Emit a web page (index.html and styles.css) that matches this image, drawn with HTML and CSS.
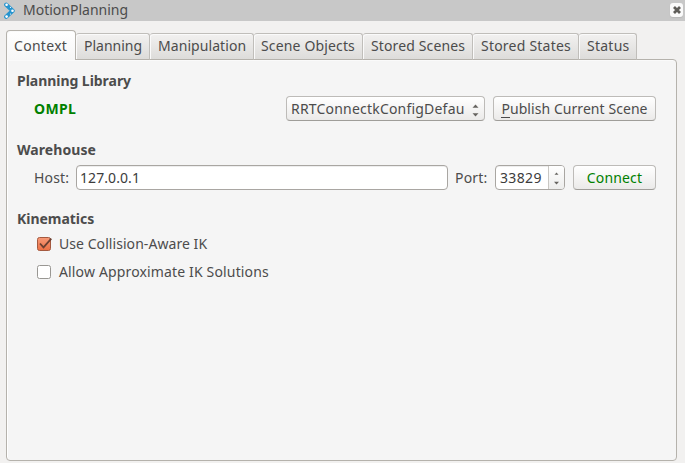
FILE: index.html
```
<!DOCTYPE html>
<html lang="en">
<head>
<meta charset="utf-8">
<title>MotionPlanning</title>
<link rel="stylesheet" href="styles.css">
</head>
<body>
<header class="titlebar">
  <svg class="logo" width="12" height="18" viewBox="0 0 12 18">
    <path d="M2.2 2.8 8.6 8.8 2.2 14.8" fill="none" stroke="#2694cf" stroke-width="4.2" stroke-linejoin="round" stroke-linecap="round"/>
    <g fill="#fff"><circle cx="2.6" cy="2.8" r="1.3"/><circle cx="6.5" cy="5.3" r=".6"/><circle cx="8.5" cy="8.8" r="1.3"/><circle cx="6.5" cy="12" r=".6"/><circle cx="2.6" cy="14.6" r="1.3"/></g>
  </svg>
  <span class="tight">MotionPlanning</span>
  <button class="close" aria-label="Close"><svg width="8" height="8" viewBox="0 0 8 8"><path d="M1 1 7 7M7 1 1 7" stroke="#5f5d59" stroke-width="2.8"/></svg></button>
</header>
<nav class="tabs">
  <div class="tab active">Context</div>
  <div class="tab planning">Planning</div>
  <div class="tab manipulation">Manipulation</div>
  <div class="tab objects">Scene Objects</div>
  <div class="tab scenes">Stored Scenes</div>
  <div class="tab states">Stored States</div>
  <div class="tab status">Status</div>
</nav>
<main class="pane">
  <section>
    <h2 class="library">Planning Library</h2>
    <div class="row">
      <span class="ompl">OMPL</span>
      <div class="button combo"><span>RRTConnectkConfigDefau</span>
        <svg width="7" height="13" viewBox="0 0 7 13" fill="#65635f"><path d="M.5 3.8 3.5.5l3 3.3zM.5 9.2l3 3.3 3-3.3z"/></svg>
      </div>
      <div class="button publish"><span><span class="mnemonic">P</span>ublish Current Scene</span></div>
    </div>
  </section>
  <section>
    <h2 class="warehouse">Warehouse</h2>
    <div class="row">
      <span class="host">Host:</span>
      <div class="field address">127.0.0.1</div>
      <span class="port">Port:</span>
      <div class="field spin"><span class="number">33829</span>
        <span class="steps"><svg width="5" height="13" viewBox="0 0 5 13" fill="#65635f"><path d="M.5 2.8 2.5.5l2 2.3z"/><path d="M0 9.7 2.5 12.5 5 9.7z"/></svg></span>
      </div>
      <div class="button connect">Connect</div>
    </div>
  </section>
  <section>
    <h2>Kinematics</h2>
    <div class="check">
      <svg width="17" height="16" viewBox="0 0 17 16"><defs><linearGradient id="on" x2="0" y2="1"><stop stop-color="#f79a78"/><stop offset="1" stop-color="#ec6f43"/></linearGradient></defs><rect x="1.5" y="1.5" width="13" height="13" rx="2" fill="url(#on)" stroke="#a4593f"/><path d="M4 7.5 7.5 11.3 15.3 2.7" fill="none" stroke="#6b3f31" stroke-width="1.8"/></svg>
      <span class="aware">Use Collision-Aware IK</span>
    </div>
    <div class="check">
      <svg width="17" height="16" viewBox="0 0 17 16"><rect x="1.5" y="1.5" width="13" height="13" rx="2" fill="#fff" stroke="#999793"/></svg>
      <span class="approx">Allow Approximate IK Solutions</span>
    </div>
  </section>
</main>
</body>
</html>
```
FILE: styles.css
```
* { box-sizing: border-box; }
body {
  margin: 0;
  height: 463px;
  overflow: hidden;
  background: #f2f1f0;
  color: #4c4c4c;
  font: 14px/20px "Noto Sans", sans-serif;
  letter-spacing: .17px;
  white-space: nowrap;
}
.titlebar {
  display: flex;
  align-items: flex-start;
  height: 21px;
  padding: 0 2px 0 4px;
  background: #c8c8c8;
}
.logo { margin: 2px 7px 0 0; }
.tight { letter-spacing: 0; }
.close {
  display: flex;
  align-items: center;
  justify-content: center;
  width: 13px;
  height: 14px;
  margin: 3px 0 0 auto;
  padding: 0;
  border: 0;
  border-radius: 3px;
  background: #fafafa;
  box-shadow: 0 1px 1px #9995;
}
.tabs {
  display: flex;
  align-items: flex-end;
  height: 39px;
  padding-left: 6px;
}
.tab {
  height: 27px;
  padding: 2px 0 0 7px;
  border: 1px solid #c0beba;
  border-left: 0;
  border-bottom-color: #b5b2ac;
  border-radius: 3px 3px 0 0;
  background: linear-gradient(#f2f1f0, #dddcda);
  box-shadow: inset 1px 1px #fafafa;
}
.tab.active {
  position: relative;
  width: 70px;
  height: 30px;
  padding: 5px 0 0 7px;
  border: 1px solid #b5b2ac;
  border-bottom: 0;
  border-radius: 4px 4px 0 0;
  background: linear-gradient(#fff, #f6f6f6);
  letter-spacing: .3px;
}
.tab.planning { width: 74px; padding-left: 8px; letter-spacing: 0; }
.tab.manipulation { width: 104px; padding-left: 8px; letter-spacing: .07px; }
.tab.objects { width: 109px; letter-spacing: .15px; }
.tab.scenes { width: 110px; padding-left: 8px; letter-spacing: .13px; }
.tab.states { width: 106px; padding-left: 8px; letter-spacing: .22px; }
.tab.status { width: 58px; padding-left: 8px; letter-spacing: .25px; }
.pane {
  width: 671px;
  height: 402px;
  margin: -1px 0 0 6px;
  padding: 11px 20px 0 10px;
  border: 1px solid #b5b2ac;
  border-radius: 0 4px 4px 4px;
  background: #f5f5f5;
  box-shadow: inset 1px 0 #fff, inset 0 1px #fafafa;
}
section { margin-bottom: 19px; }
h2 {
  margin: 0 0 5px;
  font-size: 14px;
  font-weight: 700;
  line-height: 20px;
  letter-spacing: -.03px;
}
.library { letter-spacing: -.04px; }
.warehouse { letter-spacing: .08px; }
.row {
  display: flex;
  align-items: center;
  height: 25px;
  padding-left: 17px;
}
.ompl {
  margin-right: auto;
  color: #008000;
  font-weight: 700;
  letter-spacing: .35px;
}
.button, .field {
  display: flex;
  align-items: center;
  flex-shrink: 0;
  height: 25px;
  border: 1px solid #bdbbb8;
  border-bottom-color: #9f9d99;
  border-radius: 4px;
}
.button {
  justify-content: center;
  background: linear-gradient(#fff, #ebeae9);
  box-shadow: inset 0 1px #fff;
}
.combo {
  width: 199px;
  justify-content: space-between;
  margin-right: 8px;
  padding: 0 5px 0 4px;
  letter-spacing: .2px;
}
.combo svg { margin-top: 3px; }
.publish { width: 163px; letter-spacing: .06px; }
.mnemonic {
  display: inline-block;
  height: 19px;
  border-bottom: 1px solid #4c4c4c;
}
.field {
  background: #fff;
  border-color: #a9a6a2;
  color: #3c3c3c;
  box-shadow: inset 0 1px #eee;
}
.host { width: 42px; letter-spacing: .15px; }
.address { width: 372px; padding-left: 3px; letter-spacing: .08px; }
.port { width: 47px; padding-left: 7px; letter-spacing: .2px; }
.spin { width: 70px; padding-left: 4px; letter-spacing: .35px; }
.number { width: 48px; }
.steps {
  display: flex;
  align-items: center;
  justify-content: center;
  flex: 1;
  height: 23px;
  padding-top: 1px;
  border-left: 1px solid #c9c7c3;
  border-radius: 0 3px 3px 0;
  background: linear-gradient(#fff, #ededec);
}
.connect { width: 83px; margin-left: 8px; color: #008000; letter-spacing: .15px; }
.check {
  display: flex;
  align-items: center;
  height: 20px;
  margin-bottom: 8px;
  padding-left: 19px;
}
.check svg { margin-right: 6px; }
.aware { letter-spacing: .06px; }
.approx { letter-spacing: .15px; }
```
